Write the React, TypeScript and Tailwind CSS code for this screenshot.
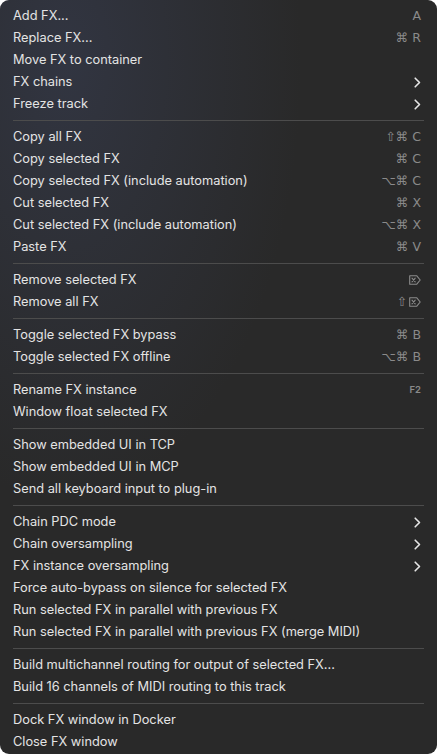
import React from "react";

type Item = { label: string; sc?: string; sub?: boolean; small?: boolean; del?: boolean };

const groups: Item[][] = [
  [
    { label: "Add FX...", sc: "A" },
    { label: "Replace FX...", sc: "⌘ R" },
    { label: "Move FX to container" },
    { label: "FX chains", sub: true },
    { label: "Freeze track", sub: true },
  ],
  [
    { label: "Copy all FX", sc: "⇧⌘ C" },
    { label: "Copy selected FX", sc: "⌘ C" },
    { label: "Copy selected FX (include automation)", sc: "⌥⌘ C" },
    { label: "Cut selected FX", sc: "⌘ X" },
    { label: "Cut selected FX (include automation)", sc: "⌥⌘ X" },
    { label: "Paste FX", sc: "⌘ V" },
  ],
  [
    { label: "Remove selected FX", sc: "", del: true },
    { label: "Remove all FX", sc: "⇧", del: true },
  ],
  [
    { label: "Toggle selected FX bypass", sc: "⌘ B" },
    { label: "Toggle selected FX offline", sc: "⌥⌘ B" },
  ],
  [
    { label: "Rename FX instance", sc: "F2", small: true },
    { label: "Window float selected FX" },
  ],
  [
    { label: "Show embedded UI in TCP" },
    { label: "Show embedded UI in MCP" },
    { label: "Send all keyboard input to plug-in" },
  ],
  [
    { label: "Chain PDC mode", sub: true },
    { label: "Chain oversampling", sub: true },
    { label: "FX instance oversampling", sub: true },
    { label: "Force auto-bypass on silence for selected FX" },
    { label: "Run selected FX in parallel with previous FX" },
    { label: "Run selected FX in parallel with previous FX (merge MIDI)" },
  ],
  [
    { label: "Build multichannel routing for output of selected FX..." },
    { label: "Build 16 channels of MIDI routing to this track" },
  ],
  [
    { label: "Dock FX window in Docker" },
    { label: "Close FX window" },
  ],
];

function Chevron() {
  return (
    <svg width="7" height="11" viewBox="0 0 7 11" className="text-[#e6e6e6]">
      <polyline
        points="1.2,1.2 5.5,5.5 1.2,9.8"
        fill="none"
        stroke="currentColor"
        strokeWidth="1.6"
        strokeLinecap="round"
        strokeLinejoin="round"
      />
    </svg>
  );
}

function DeleteForward() {
  return (
    <svg width="12" height="10" viewBox="0 0 12 10" className="text-[#8a8a8a]">
      <path
        d="M0.7,0.7 H7.6 L11.2,5 L7.6,9.3 H0.7 Z"
        fill="none"
        stroke="currentColor"
        strokeWidth="1.1"
        strokeLinejoin="round"
      />
      <path d="M3,3.2 L6.2,6.8 M6.2,3.2 L3,6.8" stroke="currentColor" strokeWidth="1.1" strokeLinecap="round" />
    </svg>
  );
}

function Row({ item }: { item: Item }) {
  return (
    <div className="flex h-[22px] items-center justify-between pl-[13px] pr-[16px]">
      <span className="text-[12.8px] text-[#e4e4e4] tracking-[0px]">{item.label}</span>
      {item.sub && <Chevron />}
      {item.sc !== undefined && (
        <span
          className={
            item.small
              ? "text-[9.5px] font-semibold text-[#8a8a8a]"
              : "flex items-center gap-[2px] text-[12.5px] text-[#8a8a8a] [font-family:'DejaVu_Sans',sans-serif]"
          }
        >
          {item.sc}
          {item.del && <DeleteForward />}
        </span>
      )}
    </div>
  );
}

export default function App() {
  return (
    <div
      className="relative h-[754px] w-[437px] overflow-hidden rounded-[9px] bg-[#292929] pt-[5px] pb-[1px]"
      style={{ fontFamily: "Inter, 'Noto Sans', sans-serif" }}
    >
      <div className="pointer-events-none absolute inset-0 bg-[radial-gradient(ellipse_at_15%_8%,rgba(60,68,95,0.45),rgba(40,40,44,0)_45%)]" />
      <div className="relative">
        {groups.map((g, gi) => (
          <div key={gi}>
            {gi > 0 && (
              <div className="py-[5px] pl-[13px] pr-[13px]">
                <div className="h-px bg-[#4c4c4c]" />
              </div>
            )}
            {g.map((it, i) => (
              <Row key={i} item={it} />
            ))}
          </div>
        ))}
      </div>
    </div>
  );
}
